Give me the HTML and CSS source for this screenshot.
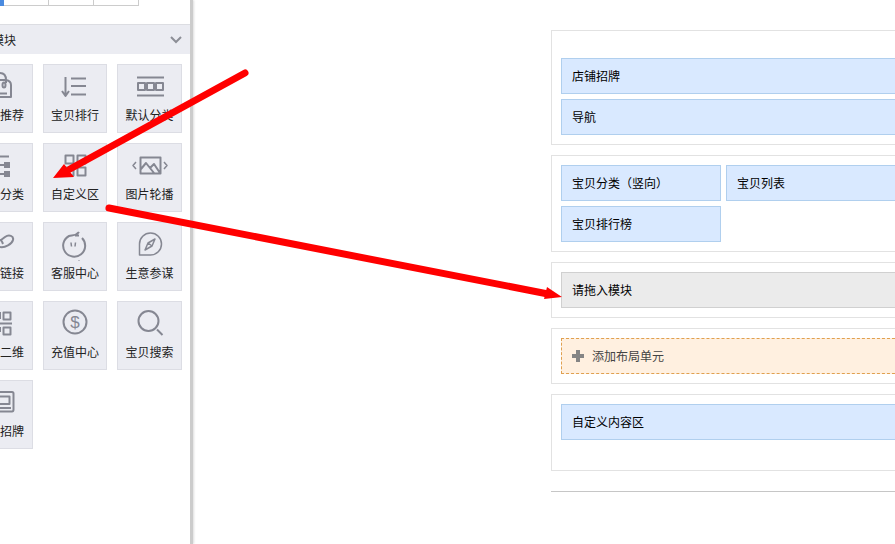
FILE: index.html
```html
<!DOCTYPE html>
<html lang="zh-CN">
<head>
  <meta charset="UTF-8" />
  <meta name="viewport" content="width=device-width, initial-scale=1.0"/>
  <title>布局管理</title>
  <link rel="stylesheet" href="styles.css">
</head>
<body>
  <aside class="sidebar">
    <div class="tabs">
      <span class="tab active"></span>
      <span class="tab"></span>
      <span class="tab"></span>
      <span class="tab"></span>
    </div>
    <div class="sidebar-title">
      <span class="title-text">模块</span>
      <svg class="chevron" viewBox="0 0 12 8"><path d="M1 1l5 5 5-5"/></svg>
    </div>

    <div class="modules">
      <button class="module cut">
        <svg class="icon" viewBox="0 0 32 38"><path d="M0 8C4 8 6 11 6 15v3M0 15h6q5 1 5 5v12H0M0 28.500h7"/><ellipse cx="4" cy="20" rx="1.500" ry="2.500"/></svg>
        推荐
      </button>
      <button class="module">
        <svg class="icon" viewBox="0 0 62 38"><path d="M21.500 12v19M18 26l3.500 5 3.500-5M27 13.500h15M27 21h15M27 29.500h15"/></svg>
        宝贝排行
      </button>
      <button class="module">
        <svg class="icon" viewBox="0 0 63 38"><path d="M19 12.500h27M19 30.500h27M20 18h7v7h-7zM29 18h7v7h-7zM38 18h7v7h-7z"/></svg>
        默认分类
      </button>

      <button class="module cut">
        <svg class="icon" viewBox="0 0 32 38"><path d="M0 12.500h9M0 21h5M0 30h5"/><path class="solid" d="M4 18h6v6H4zM4 27h6v6H4z"/></svg>
        分类
      </button>
      <button class="module">
        <svg class="icon" viewBox="0 0 62 38"><path d="M21.500 11.500h8v8h-8zM33.500 11.500h8v8h-8zM21.500 23.500h8v8h-8zM33.500 23.500h8v8h-8z"/></svg>
        自定义区
      </button>
      <button class="module">
        <svg class="icon" viewBox="0 0 63 38"><path d="M22.500 13.500h20v16h-20zM23 25l5-6 8 10M32 24l4-4 6 9"/><path class="thin" d="M18 18l-3 3.500 3 3.500M46 18l3 3.500-3 3.500"/></svg>
        图片轮播
      </button>

      <button class="module cut">
        <svg class="icon" viewBox="0 0 32 38"><path d="M1 17l4-3c4-3 9-1 8 3-1 4-8 8-13 7M0 17c2 0 2 2 3 4"/></svg>
        链接
      </button>
      <button class="module">
        <svg class="icon" viewBox="0 0 62 38"><path d="M38 15A11 11 0 1 1 25 13c3-1 7 0 10-4M31 12.500h4"/><path class="thin" d="M27 19.500l.5 4M31.500 19.500l-.5 4"/><circle class="solid" cx="35" cy="37.500" r=".6"/></svg>
        客服中心
      </button>
      <button class="module">
        <svg class="icon thin" viewBox="0 0 63 38"><path d="M21.500 32V21A11 11 0 1 1 32.500 32z"/><path d="M37 16l-3 7-7 4 3-7zM30 20l4 3"/></svg>
        生意参谋
      </button>

      <button class="module cut">
        <svg class="icon" viewBox="0 0 32 38"><path d="M3.500 10.500h7v7h-7zM0 21.500h12M3.500 25.500h7v7h-7zM0 10v7M0 25v5"/></svg>
        二维
      </button>
      <button class="module">
        <svg class="icon" viewBox="0 0 62 38"><circle cx="31" cy="20" r="11.500"/><text class="dollar" x="31" y="26">$</text></svg>
        充值中心
      </button>
      <button class="module">
        <svg class="icon" viewBox="0 0 63 38"><circle cx="30.500" cy="19" r="10"/><path d="M39 27.500l5.500 5.500"/></svg>
        宝贝搜索
      </button>

      <button class="module cut">
        <svg class="icon" viewBox="0 0 32 38"><path d="M0 11h12q1.500 0 1.500 1.500v16q0 2-1.500 2H0M0 15.500h9.500V23H0M0 27h11"/></svg>
        招牌
      </button>
    </div>
  </aside>

  <main class="layout">
    <section class="unit header-unit">
      <div class="block">店铺招牌</div>
      <div class="block">导航</div>
    </section>
    <section class="unit columns">
      <div class="column side">
        <div class="block">宝贝分类（竖向）</div>
        <div class="block">宝贝排行榜</div>
      </div>
      <div class="column wide">
        <div class="block">宝贝列表</div>
      </div>
    </section>
    <section class="unit">
      <div class="block empty">请拖入模块</div>
    </section>
    <section class="unit">
      <button class="block add">
        <svg class="plus" viewBox="0 0 12 12"><path d="M4 0h4v4h4v4H8v4H4V8H0V4h4z"/></svg>
        添加布局单元
      </button>
    </section>
    <section class="unit footer-unit">
      <div class="block">自定义内容区</div>
    </section>
    <hr class="divider">
  </main>

  <!-- drag hints -->
  <svg class="arrows" viewBox="0 0 895 544">
    <path class="line" d="M245 73L70 169M109 208L548 294"/>
    <path class="head" d="M53 178l11-14 10 13zM562 297l-15-10-3 12z"/>
  </svg>
</body>
</html>
```
FILE: styles.css
```css
* {
  box-sizing: border-box;
}
body {
  margin: 0;
  min-height: 100vh;
  display: flex;
  overflow: hidden;
  background: #fff;
  color: #000;
  font: 12px/24px "Noto Sans CJK SC", sans-serif;
}
button {
  margin: 0;
  font: inherit;
  color: inherit;
  cursor: pointer;
}

.sidebar {
  flex: none;
  width: 193px;
  border-right: 3px solid #ccc;
  box-shadow: 1px 0 2px #ddd;
}
.tabs {
  display: flex;
  height: 6px;
}
.tab {
  width: 45px;
  border-right: 1px solid #ccc;
  border-bottom: 1px solid #ccc;
}
.tab.active {
  width: 4px;
  border-color: #4a8be0;
  background: #4a8be0;
}
.sidebar-title {
  display: flex;
  align-items: center;
  justify-content: space-between;
  height: 30px;
  margin-top: 18px;
  padding-right: 8px;
  border-top: 1px solid #dcdde2;
  background: #ebecf2;
  color: #222;
}
.title-text {
  margin-left: -8px;
}
.chevron {
  width: 12px;
  height: 8px;
  fill: none;
  stroke: #8c8e96;
  stroke-width: 2;
}
.modules {
  display: grid;
  grid-template-columns: 33px 64px 65px;
  grid-auto-rows: 69px;
  gap: 10px;
  padding-top: 10px;
}
.module {
  padding: 0 0 5px;
  overflow: hidden;
  border: 1px solid #dcdde4;
  background: #ebecf2;
  color: #222;
  text-align: center;
}
.module.cut {
  border-left: 0;
  text-align: left;
}
.icon {
  display: block;
  width: 100%;
  height: 38px;
  fill: none;
  stroke: #858792;
  stroke-width: 2;
  stroke-linejoin: round;
}
.thin {
  stroke-width: 1.5;
}
.solid {
  fill: #858792;
  stroke: none;
}
.dollar {
  fill: #858792;
  stroke: none;
  font: 17px "Liberation Sans", sans-serif;
  text-anchor: middle;
}

.layout {
  flex: 1;
  display: flex;
  flex-direction: column;
  gap: 10px;
  padding: 30px 0 0 40%;
}
.unit {
  display: flex;
  flex-direction: column;
  gap: 5px;
  padding: 9px 0 9px 9px;
  border: 1px solid #e2e2e2;
  border-right: 0;
}
.header-unit {
  padding-top: 27px;
}
.footer-unit {
  padding-bottom: 30px;
}
.columns {
  flex-direction: row;
}
.column {
  display: flex;
  flex-direction: column;
  gap: 5px;
}
.side {
  width: 160px;
}
.wide {
  flex: 1;
}
.block {
  height: 36px;
  padding: 0 10px;
  border: 1px solid #b0cfee;
  background: #d9e9ff;
  line-height: 34px;
}
.unit > .block,
.wide .block {
  border-right: 0;
}
.empty {
  border-color: #d0d0d0;
  background: #ebebeb;
}
.add {
  display: flex;
  align-items: center;
  gap: 8px;
  border: 1px dashed #e0a050;
  background: #fff0e0;
  color: #444;
}
.plus {
  width: 12px;
  height: 12px;
  fill: #858585;
}
.divider {
  width: 100%;
  margin: 10px 0 0;
  border: 0;
  border-top: 1px solid #c6c6c6;
}

.arrows {
  position: absolute;
  top: 0;
  left: 0;
  width: 895px;
  height: 544px;
  pointer-events: none;
}
.line {
  fill: none;
  stroke: #f00;
  stroke-width: 7;
  stroke-linecap: round;
}
.head {
  fill: #f00;
}
```
